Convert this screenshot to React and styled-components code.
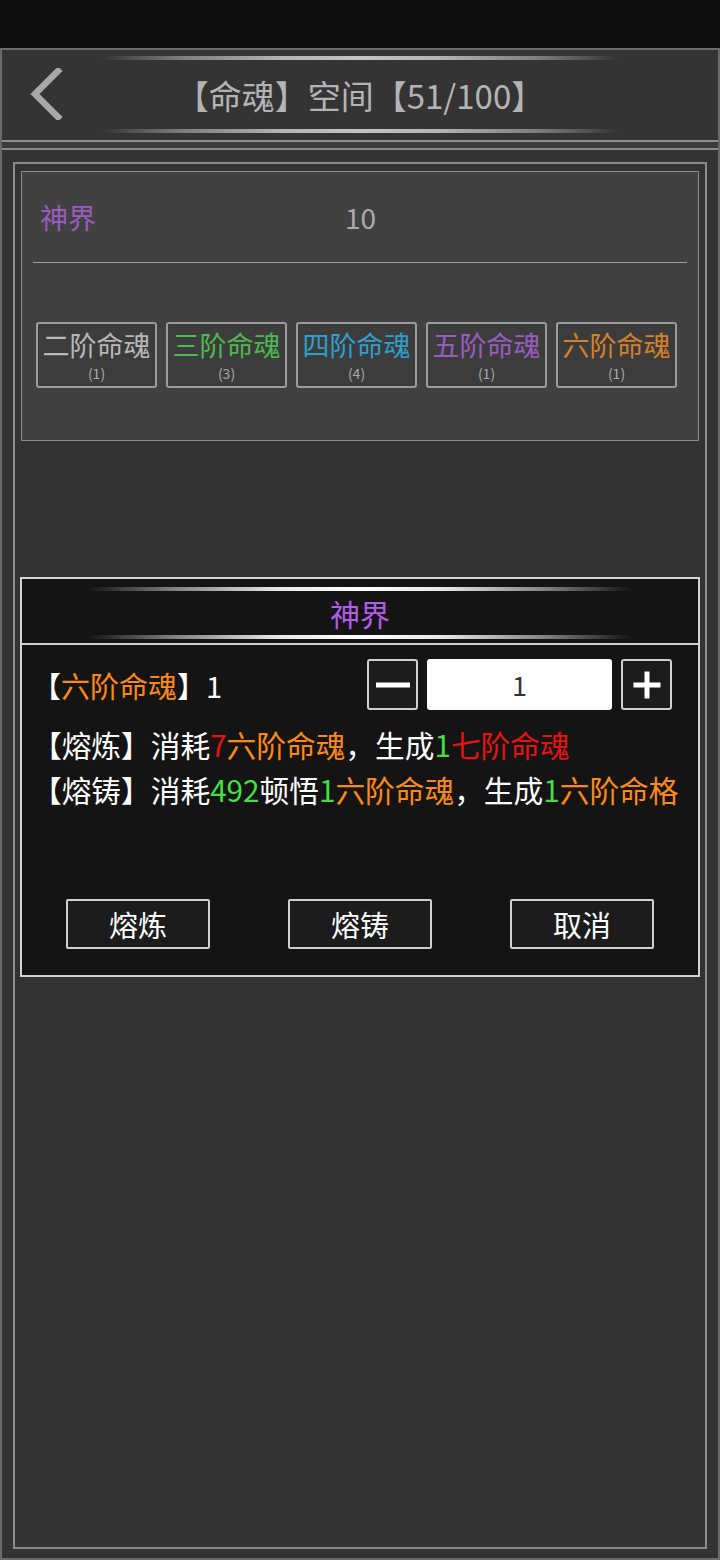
import React, { useState } from 'react'
import styled, { createGlobalStyle } from 'styled-components'

const GlobalStyle = createGlobalStyle`
  html, body {
    margin: 0;
    padding: 0;
    background: #0e0e0e;
  }
  body {
    font-family: "Noto Sans CJK SC", "Noto Sans", sans-serif;
  }
  * {
    box-sizing: border-box;
  }
`

const souls = [
  { name: '二阶命魂', count: 1, color: '#b8b8b8' },
  { name: '三阶命魂', count: 3, color: '#4fb84f' },
  { name: '四阶命魂', count: 4, color: '#2f9fce' },
  { name: '五阶命魂', count: 1, color: '#9b5cc0' },
  { name: '六阶命魂', count: 1, color: '#d6802c' },
]

const App = () => {
  const [amount, setAmount] = useState(1)

  return (
    <>
      <GlobalStyle />
      <StatusBar />
      <Frame>
        <Header>
          <BackButton aria-label="back">
            <svg width="36" height="52" viewBox="0 0 36 52">
              <path d="M30 3 L7 26 L30 49" fill="none" stroke="#a8a8a8" strokeWidth="6.5" strokeLinecap="square" />
            </svg>
          </BackButton>
          <TitleBlock>
            <DecoLine />
            <Title>【命魂】空间【51/100】</Title>
            <DecoLine />
          </TitleBlock>
          <div />
        </Header>
        <Strip />
        <Content>
          <Panel>
            <Card>
              <RealmRow>
                <RealmName>神界</RealmName>
                <RealmValue>10</RealmValue>
              </RealmRow>
              <Divider />
              <SoulList>
                {souls.map((s) => (
                  <SoulButton key={s.name}>
                    <SoulName color={s.color}>{s.name}</SoulName>
                    <SoulCount>({s.count})</SoulCount>
                  </SoulButton>
                ))}
              </SoulList>
            </Card>
          </Panel>
        </Content>
      </Frame>

      <Modal>
        <ModalHead>
          <DecoLine bright width="544px" />
          <ModalTitle>神界</ModalTitle>
          <DecoLine bright width="544px" />
        </ModalHead>
        <ModalBody>
          <PickRow>
            <PickLabel>
              【<Orange>六阶命魂</Orange>】1
            </PickLabel>
            <Stepper>
              <StepButton onClick={() => setAmount(Math.max(1, amount - 1))} aria-label="minus">
                <svg width="36" height="36" viewBox="0 0 36 36">
                  <rect x="1" y="15.5" width="34" height="5" fill="#fff" />
                </svg>
              </StepButton>
              <AmountInput value={amount} readOnly />
              <StepButton onClick={() => setAmount(amount + 1)} aria-label="plus">
                <svg width="30" height="30" viewBox="0 0 30 30">
                  <rect x="1.5" y="12.5" width="27" height="5" fill="#fff" />
                  <rect x="12.5" y="1.5" width="5" height="27" fill="#fff" />
                </svg>
              </StepButton>
            </Stepper>
          </PickRow>
          <Desc>
            <DescLine>
              【熔炼】消耗<Red>7</Red>
              <Orange>六阶命魂</Orange>，生成<Green>1</Green>
              <Red>七阶命魂</Red>
            </DescLine>
            <DescLine>
              【熔铸】消耗<Green>492</Green>顿悟<Green>1</Green>
              <Orange>六阶命魂</Orange>，生成<Green>1</Green>
              <Orange>六阶命格</Orange>
            </DescLine>
          </Desc>
          <Actions>
            <ActionCell>
              <ActionButton>熔炼</ActionButton>
            </ActionCell>
            <ActionCell>
              <ActionButton>熔铸</ActionButton>
            </ActionCell>
            <ActionCell>
              <ActionButton>取消</ActionButton>
            </ActionCell>
          </Actions>
        </ModalBody>
      </Modal>
    </>
  )
}

export default App

const StatusBar = styled.div`
  height: 48px;
  background: #0e0e0e;
`

const Frame = styled.div`
  height: 1512px;
  display: flex;
  flex-direction: column;
  background: #333333;
  border: 2px solid #6a6a6a;
`

const Header = styled.header`
  height: 92px;
  display: grid;
  grid-template-columns: 1fr 520px 1fr;
  align-items: center;
  background: #343434;
  border-bottom: 2px solid #8e8e8e;
`

const BackButton = styled.button`
  justify-self: start;
  margin-left: 26px;
  margin-top: -2px;
  padding: 0;
  border: none;
  background: none;
  display: flex;
  cursor: pointer;
`

const TitleBlock = styled.div`
  display: flex;
  flex-direction: column;
  align-items: center;
  height: 100%;
  padding: 6px 0 7px;
`

const DecoLine = styled.div`
  flex-shrink: 0;
  width: ${(p) => p.width || '100%'};
  height: 4px;
  border-radius: 2px;
  background: ${(p) =>
    p.bright
      ? 'linear-gradient(90deg, rgba(120,120,120,0) 0%, rgba(150,150,150,0.8) 15%, #e8e8e8 35%, #ffffff 50%, #e8e8e8 65%, rgba(150,150,150,0.8) 85%, rgba(120,120,120,0) 100%)'
      : 'linear-gradient(90deg, rgba(130,130,130,0) 0%, rgba(140,140,140,0.8) 15%, #b4b4b4 35%, #c4c4c4 50%, #b4b4b4 65%, rgba(140,140,140,0.8) 85%, rgba(130,130,130,0) 100%)'};
`

const Title = styled.h1`
  flex: 1;
  margin: 0;
  display: flex;
  align-items: center;
  font-size: 33px;
  font-weight: 400;
  color: #b4b4b4;
  white-space: nowrap;
`

const Strip = styled.div`
  height: 8px;
  background: #3c3c3c;
  border-bottom: 2px solid #8a8a8a;
`

const Content = styled.main`
  flex: 1;
  display: flex;
  padding: 12px 11px 9px;
`

const Panel = styled.section`
  flex: 1;
  border: 2px solid #8a8a8a;
  padding: 7px 6px;
`

const Card = styled.div`
  background: #414141;
  border: 1px solid #8c8c8c;
  padding-bottom: 52px;
`

const RealmRow = styled.div`
  height: 90px;
  display: flex;
  align-items: center;
  padding-left: 18px;
`

const RealmName = styled.span`
  width: 305px;
  font-size: 28px;
  color: #9b5cc0;
`

const RealmValue = styled.span`
  font-size: 28px;
  color: #ababab;
`

const Divider = styled.hr`
  margin: 0 11px;
  border: none;
  height: 1px;
  background: #9c9c9c;
`

const SoulList = styled.div`
  display: flex;
  gap: 9px;
  padding: 59px 0 0 14px;
`

const SoulButton = styled.button`
  width: 121px;
  height: 66px;
  display: flex;
  flex-direction: column;
  align-items: center;
  justify-content: center;
  padding: 0;
  background: #3c3c3c;
  border: 2px solid #9c9c9c;
  border-radius: 3px;
  font-family: inherit;
  cursor: pointer;
`

const SoulName = styled.span`
  margin-top: 1px;
  font-size: 27px;
  line-height: 28px;
  color: ${(p) => p.color};
  white-space: nowrap;
`

const SoulCount = styled.span`
  margin-top: 6px;
  font-size: 14px;
  line-height: 16px;
  color: #aaaaaa;
`

const Modal = styled.div`
  position: fixed;
  left: 20px;
  top: 577px;
  width: 680px;
  background: #141414;
  border: 2px solid #d4d4d4;
`

const ModalHead = styled.div`
  height: 66px;
  display: flex;
  flex-direction: column;
  align-items: center;
  padding: 8px 0 8px;
  border-bottom: 2px solid #d0d0d0;
`

const ModalTitle = styled.h2`
  flex: 1;
  margin: 0;
  display: flex;
  align-items: center;
  font-size: 30px;
  font-weight: 400;
  color: #b35de8;
`

const ModalBody = styled.div`
  padding: 14px 26px 26px 10px;
`

const PickRow = styled.div`
  display: flex;
  align-items: center;
  justify-content: space-between;
  height: 51px;
`

const PickLabel = styled.span`
  font-size: 29px;
  color: #ffffff;
  white-space: nowrap;
`

const Stepper = styled.div`
  display: flex;
  gap: 9px;
`

const StepButton = styled.button`
  width: 51px;
  height: 51px;
  display: flex;
  align-items: center;
  justify-content: center;
  padding: 0;
  background: #1c1c1c;
  border: 2px solid #cfcfcf;
  border-radius: 3px;
  cursor: pointer;
`

const AmountInput = styled.input`
  width: 185px;
  height: 51px;
  border: none;
  border-radius: 3px;
  background: #ffffff;
  text-align: center;
  font-family: inherit;
  font-size: 27px;
  color: #333333;
  outline: none;
`

const Desc = styled.div`
  margin-top: 12px;
`

const DescLine = styled.p`
  margin: 0;
  font-size: 29.7px;
  line-height: 45px;
  color: #ffffff;
  white-space: nowrap;
`

const Orange = styled.span`
  color: #ff8a1c;
`

const Red = styled.span`
  color: #e41414;
`

const Green = styled.span`
  color: #45df45;
`

const Actions = styled.div`
  display: grid;
  grid-template-columns: repeat(3, 222px);
  justify-content: center;
  margin-top: 87px;
  margin-right: -16px;
`

const ActionCell = styled.div`
  display: flex;
  justify-content: center;
`

const ActionButton = styled.button`
  width: 144px;
  height: 50px;
  background: #1c1c1c;
  border: 2px solid #cfcfcf;
  border-radius: 2px;
  font-family: inherit;
  font-size: 29px;
  color: #ffffff;
  cursor: pointer;
`
